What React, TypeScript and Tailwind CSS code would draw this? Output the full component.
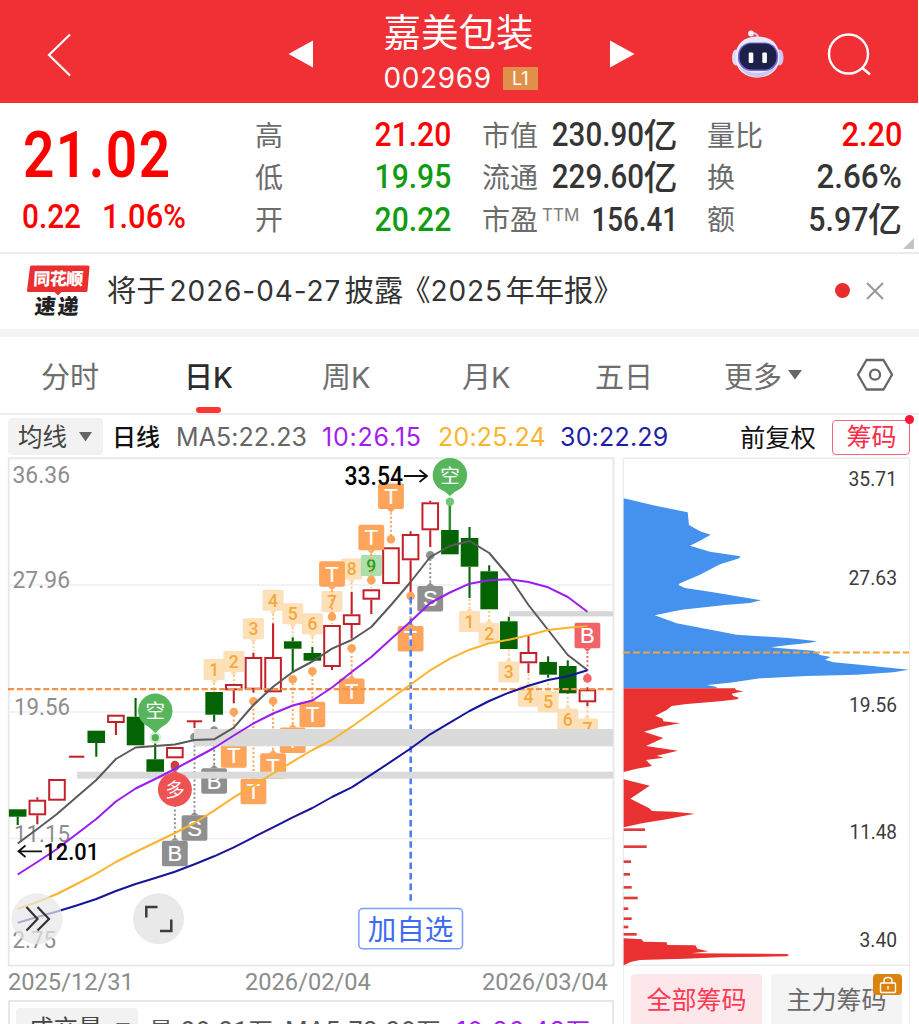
import React from 'react';

const X0 = 17.7;
const STEP = 19.645;
const xAt = (i: number) => X0 + STEP * i;

type Candle = [dir: 'u' | 'd' | 'f', high: number, top: number, bottom: number, low: number];

const candles: Candle[] = [
  ['d', 809.3, 809.3, 816.7, 825],
  ['u', 797.3, 799.7, 815.3, 824.3],
  ['u', 779, 779, 800.7, 800.7],
  ['f', 756.7, 756.7, 756.7, 756.7],
  ['d', 730.7, 730.7, 743, 756.7],
  ['u', 714.7, 714.7, 723, 735],
  ['d', 698, 716.7, 745.3, 745.3],
  ['d', 742.7, 759.3, 772, 772],
  ['u', 747, 747, 758.3, 758.3],
  ['f', 721.3, 721.3, 721.3, 728],
  ['d', 692, 692, 714.7, 721.7],
  ['u', 684, 684, 690.3, 703.3],
  ['u', 652.7, 657, 689.7, 692.7],
  ['u', 623.3, 657, 692.3, 692.3],
  ['d', 637.3, 641.3, 648.7, 672.7],
  ['d', 647, 653, 660.7, 662],
  ['u', 625, 625, 667, 670],
  ['u', 592, 614.3, 625, 638.7],
  ['u', 589.3, 589.3, 599.7, 614],
  ['u', 547.3, 547.3, 584, 584],
  ['u', 531.3, 534, 560.3, 592.7],
  ['u', 500.7, 502.3, 530.3, 547],
  ['d', 504, 530, 554.3, 554.3],
  ['d', 527, 538, 566.7, 598],
  ['d', 565.3, 571.3, 609.3, 609.3],
  ['d', 616.7, 621.3, 649, 649],
  ['u', 636, 652, 663.3, 673],
  ['d', 656.3, 662, 674.7, 677.7],
  ['d', 660.3, 666, 693.3, 694],
  ['u', 687.3, 689.3, 702.3, 706],
];

const ma5 = [843.5, 829, 814, 797, 780, 759, 747.5, 746, 744.5, 740, 739.3, 727.7, 705, 686.7, 672, 661.5, 648.7, 640, 627, 605, 582, 557, 546, 541, 553, 576, 605, 630, 655, 670];
const ma10 = [874.5, 862, 849, 834, 819, 801.5, 788.5, 779, 769, 758.5, 748, 735.5, 723.5, 713.5, 705.5, 700.5, 687.5, 672, 657, 639, 621.5, 603, 592.5, 583.7, 580.3, 579.3, 582, 587.3, 597, 611.7];
const ma20 = [909, 902, 894, 884, 873.7, 862, 852, 842.5, 833, 823, 810.7, 797.3, 785.7, 773.3, 761.7, 750, 740, 726.7, 712.7, 698.5, 684.5, 670.3, 658.7, 649.7, 643.3, 639.7, 635.3, 630, 627.7, 626];
const ma30 = [922.7, 917, 911.5, 905.5, 899, 891, 884, 878, 871.7, 864.3, 856.3, 847.3, 837.3, 827.3, 817.3, 808, 797, 787.3, 774.7, 761.7, 748.5, 734.3, 722.7, 711, 701, 692.7, 685.7, 680, 676.3, 670.3];

const toPath = (ys: number[]) => ys.map((y, i) => `${i ? 'L' : 'M'}${xAt(i).toFixed(1)} ${y}`).join('');

function CandleMark({ c, i }: { c: Candle; i: number }) {
  const [dir, high, top, bottom, low] = c;
  const x = xAt(i);
  if (dir === 'f')
    return (
      <g stroke="#c4202a" strokeWidth="2">
        <path d={`M${x - 7.7} ${top}H${x + 7.7}`} />
        {low > top && <path d={`M${x} ${top}V${low}`} />}
      </g>
    );
  const color = dir === 'u' ? '#c4202a' : '#046404';
  return (
    <g stroke={color} strokeWidth="2.1">
      {high < top && <path d={`M${x} ${high}V${top}`} />}
      {low > bottom && <path d={`M${x} ${bottom}V${low}`} />}
      {dir === 'u' ? (
        <rect x={x - 7.8} y={top + 1} width="15.6" height={bottom - top - 2} fill="#fff" strokeWidth="2" />
      ) : (
        <rect x={x - 8.8} y={top} width="17.6" height={bottom - top} fill={color} stroke="none" />
      )}
    </g>
  );
}

// Numbered sequence tag; `up` puts its pointer on the upper edge.
function Count({ i, y, n, up, green }: { i: number; y: number; n: string; up?: boolean; green?: boolean }) {
  const x = xAt(i);
  const bg = green ? '#a6dca6' : '#fcddb2';
  return (
    <g>
      <rect x={x - 10.5} y={y} width="21" height="21" rx="1.5" fill={bg} fillOpacity=".92" />
      {up ? (
        <path d={`M${x - 3.5} ${y}L${x} ${y - 4}L${x + 3.5} ${y}Z`} fill={bg} />
      ) : (
        <path d={`M${x - 3.5} ${y + 21}L${x} ${y + 25}L${x + 3.5} ${y + 21}Z`} fill={bg} />
      )}
      <path d={up ? `M${x} ${y - 12}V${y - 3}` : `M${x} ${y + 24}V${y + 33}`} stroke="#f9c682" strokeWidth="1.8" strokeDasharray="2 2" />
      <text x={x} y={y + 16.8} textAnchor="middle" fontFamily="Roboto, sans-serif" fontWeight="500" fontSize="17.5" fill={green ? '#22a022' : '#f5a93c'}>
        {n}
      </text>
    </g>
  );
}

// Square trade tag joined to its day by a dotted line ending in a dot.
function Tag({ i, y, dot, t, color }: { i: number; y: number; dot: number; t: string; color: string }) {
  const x = xAt(i);
  const below = dot < y;
  const edge = below ? y : y + 25.5;
  const tip = below ? y - 3.5 : y + 29;
  return (
    <g>
      <path d={`M${x} ${tip}V${dot}`} stroke={color} strokeWidth="2" strokeDasharray="2 2.3" />
      <circle cx={x} cy={dot} r="4.3" fill={color} />
      <path d={`M${x - 4} ${edge}L${x} ${tip}L${x + 4} ${edge}Z`} fill={color} />
      <rect x={x - 12.9} y={y} width="25.8" height="25.5" rx="2" fill={color} />
      <text x={x} y={y + 20.3} textAnchor="middle" fontFamily="'Liberation Sans', sans-serif" fontSize="22" fill="#fff" stroke="#fff" strokeWidth=".2">
        {t}
      </text>
    </g>
  );
}

const OR = '#fea45b';
const GY = '#8f8f8f';

function Axis({ x, y, w, children, fill = '#8e8e8e', size = 24.5, anchor, weight }: { x: number; y: number; w: number; children: string; fill?: string; size?: number; anchor?: 'end'; weight?: number }) {
  return (
    <text x={x} y={y} textAnchor={anchor} textLength={w} lengthAdjust="spacingAndGlyphs" fontFamily="Roboto, sans-serif" fontWeight={weight} fontSize={size} fill={fill}>
      {children}
    </text>
  );
}

function KChart() {
  return (
    <svg width="618" height="510" viewBox="0 457 618 510" className="block">
      <rect x="8.7" y="458.3" width="604.8" height="507.2" fill="#fff" stroke="#e7e7e7" strokeWidth="1.8" />
      <path d="M9 585H613M9 712H613M9 838.5H613" stroke="#efefef" strokeWidth="1.4" />
      <Axis x={12.5} y={482.5} w={57.5}>36.36</Axis>
      <Axis x={12.5} y={588.3} w={57.5}>27.96</Axis>
      <Axis x={14} y={715} w={56}>19.56</Axis>
      <Axis x={14} y={842} w={56}>11.15</Axis>
      <Axis x={12.5} y={948} w={43.5}>2.75</Axis>
      <path d="M410.7 661V903" stroke="#4d7ff2" strokeWidth="2.6" strokeDasharray="6.6 4" />

      {candles.map((c, i) => (
        <CandleMark key={i} c={c} i={i} />
      ))}
      <path d="M449.9 504V530" stroke="#2f8f2f" strokeWidth="2.4" />

      <Tag i={8} y={840.7} dot={767} t="B" color={GY} />
      <Tag i={9} y={815.2} dot={737} t="S" color={GY} />
      <Tag i={10} y={768.2} dot={730.5} t="B" color={GY} />
      <Tag i={21} y={586} dot={555.3} t="S" color={GY} />
      <Tag i={12} y={778.8} dot={701.3} t="T" color={OR} />
      <Tag i={13} y={753.3} dot={701} t="T" color={OR} />
      <Tag i={11} y={742.2} dot={712} t="T" color={OR} />
      <Tag i={14} y={727.5} dot={679.3} t="T" color={OR} />
      <Tag i={15} y={701.7} dot={671.3} t="T" color={OR} />
      <Tag i={17} y={678.6} dot={648.3} t="T" color={OR} />
      <Tag i={20} y={626} dot={596} t="T" color={OR} />
      <path d="M410.7 597V660" stroke="#4d7ff2" strokeWidth="2.6" strokeDasharray="6.6 4" />

      <Count i={10} y={659} n="1" />
      <Count i={11} y={651} n="2" />
      <Count i={12} y={618.3} n="3" />
      <Count i={13} y={589.7} n="4" />
      <Count i={14} y={603.2} n="5" />
      <Count i={15} y={613.2} n="6" />
      <Count i={16} y={591} n="7" />
      <Count i={17} y={558.5} n="8" />
      <Count i={18} y={555} n="9" green />
      <Tag i={16} y={561.3} dot={616.7} t="T" color={OR} />
      <Tag i={18} y={524.8} dot={580.3} t="T" color={OR} />
      <Tag i={19} y={483.5} dot={539.3} t="T" color={OR} />

      <Count i={23} y={611} n="1" up />
      <Count i={24} y={623} n="2" up />
      <Count i={25} y={661.5} n="3" up />
      <Count i={26} y={685.8} n="4" up />
      <Count i={27} y={691.2} n="5" up />
      <Count i={28} y={708.8} n="6" up />
      <Count i={29} y={718.5} n="7" up />
      <Tag i={29} y={622.7} dot={678.4} t="B" color="#f06469" />

      <path d="M8 689.2H614" stroke="#f2944a" strokeWidth="2.2" strokeDasharray="6.2 2.6" />

      <circle cx="155.3" cy="737.7" r="6" fill="#d3efd3" />
      <circle cx="155.3" cy="737.7" r="3.6" fill="#4fb354" />
      <path d="M142 721Q150 728 155.3 733Q160.500 728 168.600 721Z" fill="#57b65b" />
      <circle cx="155.3" cy="710.8" r="17.2" fill="#57b65b" />
      <text x="155.3" y="718.1" textAnchor="middle" fontFamily="'Noto Sans CJK SC', sans-serif" fontSize="19.5" fill="#fff">空</text>
      <circle cx="449.9" cy="501.700" r="4.2" fill="#6ec872" />
      <path d="M436.500 486Q445 491 449.900 496Q455 491 463.300 486Z" fill="#57b65b" />
      <circle cx="449.9" cy="475.2" r="17.2" fill="#57b65b" />
      <text x="449.9" y="482.5" textAnchor="middle" fontFamily="'Noto Sans CJK SC', sans-serif" fontSize="19.5" fill="#fff">空</text>

      <rect x="194" y="729" width="419" height="17.3" fill="#dadada" />
      <rect x="77" y="771.700" width="536" height="6.900" fill="#dadada" />
      <rect x="509" y="611.200" width="104" height="5.200" fill="#d6d6d6" />

      <circle cx="174.9" cy="765" r="4.3" fill="#c4413f" />
      <path d="M163 778Q171 774 174.900 770Q179 774 187 778Z" fill="#ee5253" />
      <circle cx="174.9" cy="789.5" r="17" fill="#ee5253" />
      <text x="174.9" y="796.8" textAnchor="middle" fontFamily="'Noto Sans CJK SC', sans-serif" fontSize="19.5" fill="#fff">多</text>

      <g fill="none" strokeWidth="2" strokeLinejoin="round">
        <path d={toPath(ma5)} stroke="#5a5a5a" />
        <path d={toPath(ma10)} stroke="#9a1cf0" />
        <path d={toPath(ma20)} stroke="#fbb42f" />
        <path d={toPath(ma30)} stroke="#15159c" />
      </g>

      <Axis x={344.5} y={485.3} w={58.5} fill="#000" size={25} weight={500}>33.54</Axis>
      <path d="M404 476H426.500M419.500 470L427 476L419.500 482" fill="none" stroke="#111" strokeWidth="1.800" />
      <Axis x={43.5} y={860} w={55.5} fill="#000" size={24.5} weight={500}>12.01</Axis>
      <path d="M42 851.300H19M25.500 845.500L18.500 851.300L25.500 857" fill="none" stroke="#111" strokeWidth="1.800" />

      <circle cx="37" cy="918.700" r="25.500" fill="#e7e7e7" fillOpacity=".72" />
      <path d="M26.500 907L37.500 919L26.500 930.500M37.500 907L49 919L37.500 930.500" fill="none" stroke="#333" strokeWidth="2.200" />
      <circle cx="158.500" cy="918.700" r="25.500" fill="#e9e9e9" />
      <path d="M146.300 917.500V907H157.500M160 931H171.300V919.500" fill="none" stroke="#3c3c3c" strokeWidth="2.500" />

      <rect x="358.800" y="908.500" width="103.700" height="40.300" rx="4" fill="#fff" stroke="#7c9df5" strokeWidth="1.500" />
      <text x="410.600" y="939.5" textAnchor="middle" fontFamily="'Noto Sans CJK SC', sans-serif" fontSize="28.500" fill="#3d6cf2">加自选</text>
    </svg>
  );
}

// Outline points are [u, v] in thirds of a pixel from the panel's corner.
const trapped = 'M41 127L130 148L233 169L237 207L270 226L302 236L270 254L240 269L300 287L391 301L388 307L330 325L270 356L210 382L205 387L225 396L300 407L453 433L420 441L345 447L215 461L134 478L200 502L380 536L535 546L622 556L600 560L530 568L483 574L530 578L612 584L630 597L662 603L645 611L670 619L750 626L897 641L850 649L740 656L590 660L450 667L360 680L291 687L320 693L320 697L41 697Z';
const gain = 'M41 697L375 697L378 702L400 706L365 713L370 720L387 725L382 730L330 736L230 744L185 750L170 762L136 779L158 788L160 796L210 802L150 813L102 827L160 846L108 870L204 884L140 899L160 905L108 912L126 930L80 938L41 948ZM41 970L119 989L61 1028L118 1057L126 1065L190 1067L254 1073L170 1090L100 1101L41 1114Z';
const base = 'M41 1447L95 1450L100 1457L170 1459L172 1467L256 1468L262 1478L295 1486L245 1492L530 1494L538 1497L530 1501L330 1504L225 1508L90 1512L62 1518L41 1528Z';
const ticks = [
  [1121, 105], [1172, 110], [1217, 63], [1255, 60], [1294, 65], [1326, 83], [1358, 55], [1388, 65], [1413, 55], [1435, 80],
];

function ChipChart() {
  return (
    <svg width="301" height="509" viewBox="618 457 301 509" className="block">
      <path d="M623 458.300H910M623 965.300H910M623.3 458V966M909.5 458V966" stroke="#ececec" strokeWidth="1.400" />
      <g transform="translate(610 456) scale(.33333)">
        <path d={trapped} fill="#4592ee" />
        <path d={gain} fill="#e83130" />
        <path d={base} fill="#e83130" />
        {ticks.map(([y, x]) => (
          <rect key={y} x="41" y={y - 4} width={x - 41} height="8" fill="#e03a3a" />
        ))}
      </g>
      <path d="M623 652.400H909" stroke="#f5a33a" strokeWidth="2" strokeDasharray="6.800 3.200" />
      <Axis x={897} y={486} w={48.5} size={21} fill="#3c3c3c" anchor="end">35.71</Axis>
      <Axis x={897} y={585} w={48.5} size={21} fill="#3c3c3c" anchor="end">27.63</Axis>
      <Axis x={897} y={712} w={48} size={21} fill="#3c3c3c" anchor="end">19.56</Axis>
      <Axis x={897} y={839} w={47.5} size={21} fill="#3c3c3c" anchor="end">11.48</Axis>
      <Axis x={897} y={946.5} w={37.5} size={21} fill="#3c3c3c" anchor="end">3.40</Axis>
    </svg>
  );
}

function Robot() {
  return (
    <svg width="54" height="50" viewBox="730 29 54 50" className="block">
      <path d="M750 33.500Q757 32 758.500 38" stroke="#cfd3f0" strokeWidth="1.800" fill="none" />
      <circle cx="751" cy="33.500" r="2.900" fill="#eef0ff" />
      <ellipse cx="736" cy="57.500" rx="4" ry="8" fill="#dcdcf6" />
      <ellipse cx="779.500" cy="57.500" rx="4" ry="8" fill="#cfc8f2" />
      <path d="M757.500 36.500C773 36.500 779.500 46 779.500 57C779.500 70 770 77.500 757.500 77.500S735.500 70 735.500 57C735.500 46 742 36.500 757.500 36.500Z" fill="#e9e9fa" />
      <path d="M738 66Q745 76 757.500 77.500Q770 76 777.500 66Q768 73 757.500 73Q746 73 738 66Z" fill="#c9c9ee" />
      <rect x="738" y="42.500" width="40" height="28.500" rx="13" fill="#7a63dd" />
      <rect x="739.500" y="43.500" width="37" height="26" rx="12" fill="#1c2148" />
      <rect x="748.700" y="52.500" width="4.600" height="10.500" rx="1.200" fill="#fff" />
      <rect x="762.300" y="52.500" width="4.600" height="10.500" rx="1.200" fill="#fff" />
    </svg>
  );
}

function ExpressLogo() {
  return (
    <div className="relative h-[54px] w-[64px] shrink-0">
      <svg width="64" height="54" viewBox="26 263 64 54" className="block">
        <path d="M31.500 264.500H88Q89.700 264.500 89.500 266L87.500 289.500Q87.300 291 85.800 291H61.500L58 294.500L54.500 291H28.500Q26.800 291 27 289.500L30 266Q30.200 264.500 31.500 264.500Z" fill="#e92f30" />
      </svg>
      <span className="absolute left-[6px] top-[3px] w-[52px] -skew-x-3 text-center text-[17px] font-black leading-[22px] tracking-[-0.5px] text-white">同花顺</span>
      <span className="absolute left-[6px] top-[29px] w-[52px] -skew-x-6 text-center text-[21px] font-black leading-[24px] tracking-[2px] text-[#222]">速递</span>
    </div>
  );
}

const num = 'inline-block font-[Roboto] text-[33px] font-medium leading-[42px]';

function Quote() {
  return (
    <section className="flex h-[149.500px] pt-[11.500px] text-[28px] text-[#6b6b6b]">
      <div className="w-[255px] pl-[22px] text-[#fe0000]">
        <div className="ml-px h-[82px] origin-left scale-x-[.84] font-[Roboto] text-[65.500px] font-semibold leading-[82px] tracking-[1.700px]">21.02</div>
        <div className="flex h-[42px] leading-[41px]">
          <span className="w-[79.500px] origin-left scale-x-[.9] font-[Roboto] text-[33px] font-medium">0.22</span>
          <span className="origin-left scale-x-[.935] font-[Roboto] text-[33px] font-medium">1.06%</span>
        </div>
      </div>
      <div className="flex w-[227px] flex-col pr-[31px]">
        {[['高', '21.20', 'text-[#fe0000]'], ['低', '19.95', 'text-[#0f9c12]'], ['开', '20.22', 'text-[#0f9c12]']].map(([k, v, c]) => (
          <div key={k} className="flex h-[42.300px] items-center justify-between leading-[42px]">
            <span className="-mt-[3px]">{k}</span>
            <span className={`${num} ${c} origin-right scale-x-[.91]`}>{v}</span>
          </div>
        ))}
      </div>
      <div className="flex w-[225px] flex-col whitespace-nowrap pr-[29.500px] text-[#353535]">
        {[['市值', '230.90', '亿', 'scale-x-[.895]'], ['流通', '229.60', '亿', 'scale-x-[.895]'], ['市盈', '156.41', '', 'scale-x-[.84]']].map(([k, v, u, c]) => (
          <div key={k} className="flex h-[42.300px] items-center leading-[42px]">
            <span className="-mt-[3px] w-[56px] shrink-0 text-[#6b6b6b]">{k}</span>
            {!u && <span className="-mr-4 -mt-[9px] ml-[4px] shrink-0 font-[Inter] text-[17px] text-[#7d7d7d]">TTM</span>}
            <span className={`${num} ${c} ml-auto origin-right`}>{v}</span>
            {u && <span className="-mt-[3px] text-[34px] font-medium">{u}</span>}
          </div>
        ))}
      </div>
      <div className="flex w-[195px] flex-col whitespace-nowrap text-[#353535]">
        {[['量比', '2.20', '', 'text-[#fe0000] scale-x-[.93]'], ['换', '2.66%', '', 'scale-x-[.95]'], ['额', '5.97', '亿', 'scale-x-[.92]']].map(([k, v, u, c]) => (
          <div key={k} className="flex h-[42.300px] items-center leading-[42px]">
            <span className="-mt-[3px] text-[#6b6b6b]">{k}</span>
            <span className={`${num} ${c} ml-auto origin-right`}>{v}</span>
            {u && <span className="-mt-[3px] text-[34px] font-medium">{u}</span>}
          </div>
        ))}
      </div>
      <svg width="11" height="11" className="mb-[3px] ml-px mt-auto"><path d="M11 0V11H0Z" fill="#c4c4c4" /></svg>
    </section>
  );
}

const Down = ({ w, h, c }: { w: number; h: number; c: string }) => (
  <svg width={w} height={h} viewBox="0 0 14 10" preserveAspectRatio="none"><path d="M0 0H14L7 10Z" fill={c} /></svg>
);

export default function App() {
  return (
    <div className="h-[1024px] w-[919px] overflow-hidden bg-white font-['Noto_Sans_CJK_SC',sans-serif]">
      <header className="flex h-[102.500px] w-[918px] items-center bg-[#f03035] text-white">
        <svg width="24" height="44" viewBox="47 33 24 44" className="ml-[47px] mt-[7px]"><path d="M70 34.500L49 55L70 75.500" fill="none" stroke="#fff" strokeWidth="2.200" /></svg>
        <svg width="25" height="28" viewBox="0 0 25 28" className="ml-[217px] mt-[6px]"><path d="M25 0.500V27.500L0.500 14Z" fill="#fff" /></svg>
        <div className="ml-[70.500px] mt-[2px] flex w-[156.500px] flex-col">
          <div className="h-[50px] text-[37.500px] leading-[50px]">嘉美包装</div>
          <div className="mt-[2px] flex h-[42px] items-center">
            <span className="w-[119.500px] font-[Inter] text-[28px] tracking-[0.600px]">002969</span>
            <span className="mt-px flex h-[23px] w-[34.500px] items-center justify-center bg-[#e09048] font-[Inter] text-[18px]">L1</span>
          </div>
        </div>
        <svg width="25" height="28" viewBox="0 0 25 28" className="ml-[70px] mt-[6px]"><path d="M0 0.500V27.500L24.500 14Z" fill="#fff" /></svg>
        <div className="ml-[95px] mt-[5px]"><Robot /></div>
        <svg width="46" height="46" viewBox="826 31 46 46" className="ml-[42px] mt-[6px]">
          <circle cx="848.500" cy="54" r="19.500" fill="none" stroke="#fff" strokeWidth="2.400" />
          <path d="M862.500 68L870 74.500" stroke="#fff" strokeWidth="2.600" />
        </svg>
      </header>

      <Quote />

      <section className="flex h-[77px] items-center border-t-2 border-[#ececec] pb-[2px] text-[#333]">
        <div className="ml-[26px]"><ExpressLogo /></div>
        <div className="ml-[17px] flex items-center whitespace-nowrap text-[29.300px]">
          <span className="-mt-[3px]">将于</span>
          <span className="ml-[4px] w-[175px] font-[Inter] text-[28px] tracking-[0.900px]">2026-04-27</span>
          <span className="-mt-[3px]">披露</span>
          <span className="-ml-[2px] -mt-[3px]">《</span>
          <span className="w-[75px] font-[Inter] text-[28px] tracking-[0.900px]">2025</span>
          <span className="-mt-[3px]">年年报》</span>
        </div>
        <span className="ml-auto h-[15px] w-[15px] rounded-full bg-[#e82d2f]" />
        <svg width="18" height="18" viewBox="0 0 18 18" className="ml-[16.500px] mr-[35px]"><path d="M1 1L17 17M17 1L1 17" stroke="#999" strokeWidth="2" /></svg>
      </section>

      <div className="h-[8px] bg-[#f4f4f4]" />

      <nav className="flex h-[78px] border-b-2 border-[#ededed] text-[29px] leading-[76px] text-[#6e6e6e]">
        <span className="w-[145px] pl-[41px]">分时</span>
        <span className="flex w-[135px] flex-col pl-[39px] font-medium text-[#2c2c2c]">
          <span className="h-[70px]">日<span className="font-[Inter]">K</span></span>
          <span className="ml-[12px] h-[7px] w-[25px] rounded-full bg-[#fb382f]" />
        </span>
        <span className="w-[140px] pl-[42px]">周<span className="font-[Inter]">K</span></span>
        <span className="w-[136px] pl-[42px]">月<span className="font-[Inter]">K</span></span>
        <span className="w-[138px] pl-[39px]">五日</span>
        <span className="flex items-center pl-[30px]">更多<span className="ml-[6px]"><Down w={14} h={9.5} c="#666" /></span></span>
        <svg width="38" height="34" viewBox="856 359 38 34" className="ml-[54px] mt-[21px]">
          <path d="M866.500 361H883.500L892 375.700L883.500 390.500H866.500L858 375.700Z" fill="none" stroke="#666" strokeWidth="2.300" strokeLinejoin="round" />
          <circle cx="875" cy="375.700" r="5" fill="none" stroke="#666" strokeWidth="2.300" />
        </svg>
      </nav>

      <div className="flex h-[42px] items-center whitespace-nowrap pt-px font-[Inter] text-[25px] leading-[40px] text-[#666]">
        <div className="ml-[8px] flex h-[37px] w-[95px] items-center rounded bg-[#f2f2f2] pl-[10px] font-['Noto_Sans_CJK_SC'] text-[24.500px] leading-[35px] text-[#444]">
          <span className="-mt-[2px]">均线</span><span className="ml-[12px]"><Down w={13} h={9.5} c="#666" /></span>
        </div>
        <span className="ml-[9px] mt-[-2px] w-[64px] font-['Noto_Sans_CJK_SC'] text-[24px] font-medium text-[#111]">日线</span>
        <span className="w-[145px] tracking-[0.050px]">MA5:22.23</span>
        <span className="w-[117px] pl-px tracking-[0.800px] text-[#a01ef0]">10:26.15</span>
        <span className="w-[122px] tracking-[0.200px] text-[#fbb42d]">20:25.24</span>
        <span className="w-[180px] tracking-[0.200px] text-[#1f1fa6]">30:22.29</span>
        <span className="-mt-[2px] font-['Noto_Sans_CJK_SC'] text-[25.300px] text-[#111]">前复权</span>
        <div className="relative ml-[16.500px] mt-px flex h-[35px] w-[78px] items-center justify-center rounded border-[1.500px] border-[#f2697c] font-['Noto_Sans_CJK_SC'] text-[25px] text-[#fb2c48]">
          <span className="-mt-[5px]">筹码</span>
          <span className="absolute -right-[5px] -top-[6px] h-[9px] w-[9px] rounded-full bg-[#fb1838]" />
        </div>
      </div>

      <main className="flex">
        <div className="w-[618px]">
          <KChart />
          <div className="flex h-[33px] items-center whitespace-nowrap pl-[8px] font-[Roboto] text-[24px] leading-[30px] text-[#8c8c8c]">
            <span className="-mt-[3px] w-[237px] origin-left scale-x-[.985]">2025/12/31</span>
            <span className="-mt-[3px] w-[237px] origin-left scale-x-[.985]">2026/02/04</span>
            <span className="-mt-[3px] origin-left scale-x-[.985]">2026/03/04</span>
          </div>
          <div className="ml-[8px] flex h-[50px] w-[606px] items-start whitespace-nowrap border-2 border-[#e7e7e7] pl-[6px] pt-[6px] font-[Roboto] text-[25px] leading-[44px] text-[#555]">
            <div className="flex h-[38px] w-[122px] items-center rounded bg-[#f2f2f2] pl-[13px] font-['Noto_Sans_CJK_SC'] text-[24.500px] leading-[38px] text-[#444]">
              <span className="mt-[2px]">成交量</span><span className="ml-[13px] mt-px"><Down w={14} h={9} c="#666" /></span>
            </div>
            <span className="ml-[11px] w-[32px] font-['Noto_Sans_CJK_SC'] text-[24px]">量</span>
            <span className="w-[104px] tracking-[1px]">28.21<span className="font-['Noto_Sans_CJK_SC'] text-[24px]">万</span></span>
            <span className="w-[171px] font-[Inter] tracking-[0.300px]">MA5:78.60<span className="font-['Noto_Sans_CJK_SC'] text-[24px]">万</span></span>
            <span className="font-[Inter] tracking-[1px] text-[#a01ef0]">10:86.48<span className="font-['Noto_Sans_CJK_SC'] text-[24px]">万</span></span>
          </div>
        </div>
        <div className="w-[301px]">
          <ChipChart />
          <div className="ml-[5px] flex h-[58px] w-[287px] items-start gap-[9px] border-x-[1.500px] border-[#ededed] pl-[7px] pt-[8px] text-[25px] leading-[49px]">
            <div className="h-[50px] w-[131px] rounded-t bg-[#fde7ea] text-center text-[#fb3b53]">全部筹码</div>
            <div className="relative h-[50px] w-[131px] rounded-t bg-[#f4f4f4] text-center text-[#6a6a6a]">
              主力筹码
              <span className="absolute right-0 top-0 flex h-[21px] w-[29px] items-center justify-center rounded-sm bg-[#da830f]">
                <svg width="18" height="18" viewBox="0 0 18 18" fill="none" stroke="#fff" strokeWidth="1.400">
                  <rect x="1.500" y="7" width="15" height="9.500" rx="1" />
                  <path d="M5 7V4.500Q5 1.500 9 1.500T13 4.500V7M9 10V13.500" />
                </svg>
              </span>
            </div>
          </div>
        </div>
      </main>
    </div>
  );
}
